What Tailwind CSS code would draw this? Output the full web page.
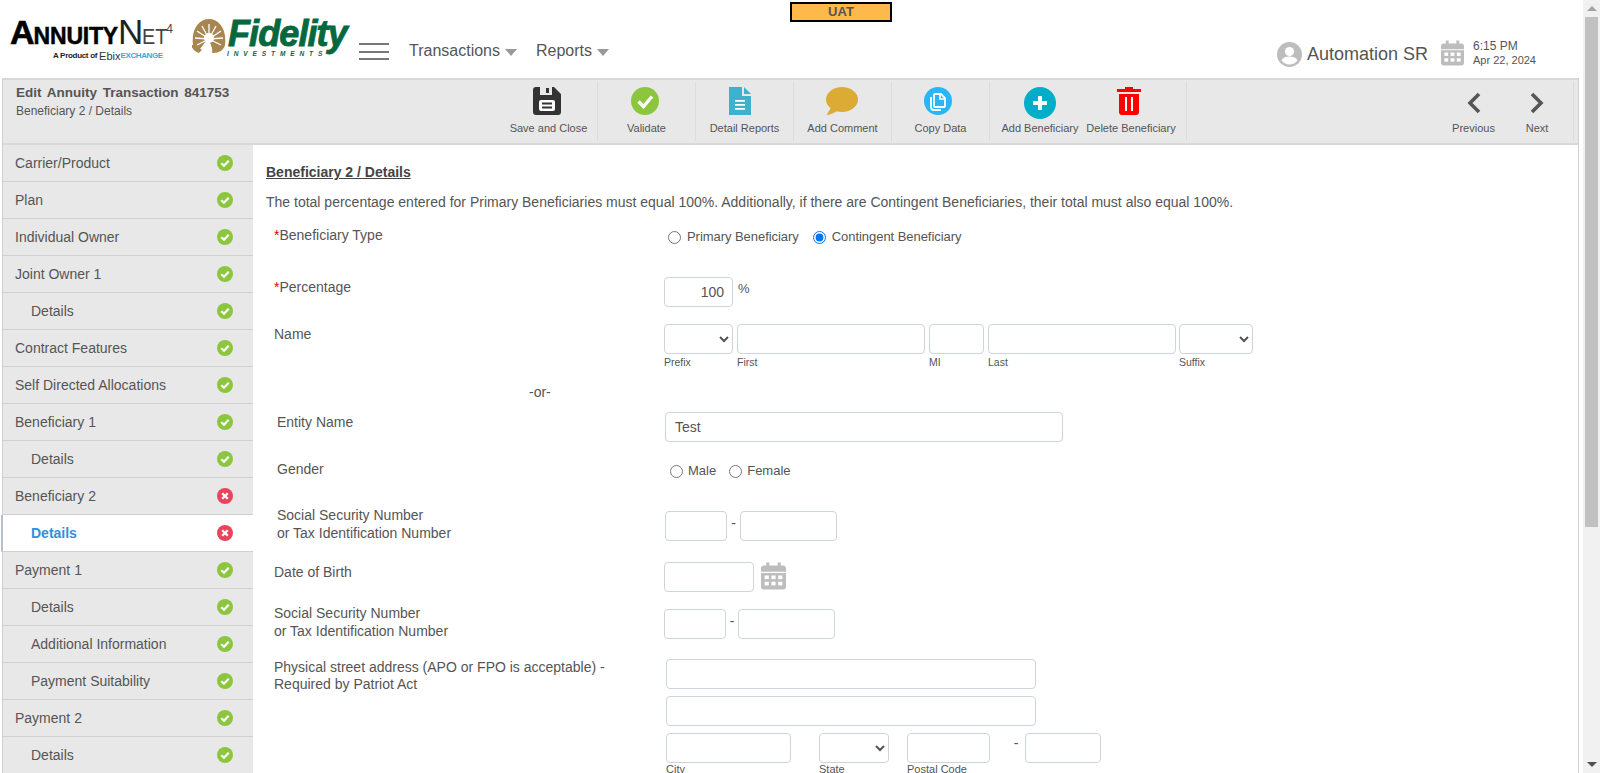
<!DOCTYPE html>
<html lang="en">
<head>
<meta charset="utf-8">
<title>Edit Annuity Transaction</title>
<script src="https://cdn.jsdelivr.net/npm/@tailwindcss/browser@4"></script>
</head>
<body class="m-0 h-[773px] w-[1600px] overflow-hidden bg-white font-['Liberation_Sans',Arial,sans-serif] text-[#555] flex">
<svg class="hidden" width="0" height="0">
  <symbol id="ok" viewBox="0 0 16 16"><circle cx="8" cy="8" r="8" fill="#8cc63f"/><path d="M4.3 8.2l2.7 2.6 4.7-5" fill="none" stroke="#fff" stroke-width="2.2"/></symbol>
  <symbol id="bad" viewBox="0 0 16 16"><circle cx="8" cy="8" r="8" fill="#e8455c"/><path d="M5.2 5.2l5.6 5.6M10.8 5.2l-5.6 5.6" fill="none" stroke="#fff" stroke-width="2.3"/></symbol>
  <symbol id="cal" viewBox="0 0 24 26"><path d="M5 0h3v3h8V0h3v3h2a3 3 0 0 1 3 3v3H0V6a3 3 0 0 1 3-3h2zM0 10h24v13a3 3 0 0 1-3 3H3a3 3 0 0 1-3-3z" fill="#bdbdbd"/><g fill="#fff"><rect x="3.5" y="12.5" width="4" height="3.5"/><rect x="10" y="12.5" width="4" height="3.5"/><rect x="16.5" y="12.5" width="4" height="3.5"/><rect x="3.5" y="18.5" width="4" height="3.5"/><rect x="10" y="18.5" width="4" height="3.5"/><rect x="16.5" y="18.5" width="4" height="3.5"/></g></symbol>
</svg>

<div class="w-[1583px] h-[773px] flex flex-col shrink-0">
  <!-- Header -->
  <header class="relative h-[78px] shrink-0 flex items-start">
    <div class="absolute left-[790px] top-[2px] w-[102px] h-[20px] bg-[#fdb94a] border-2 border-black flex items-center justify-center pb-[2px] text-[13px] font-bold leading-none text-[#555]">UAT</div>

    <div class="w-[186px] ml-[10px] mt-[17px] shrink-0">
      <div class="flex items-baseline h-[30px] text-black leading-[30px] whitespace-nowrap">
        <span class="text-[34px] font-bold [-webkit-text-stroke:0.6px_black] tracking-[-1px]">A</span><span class="text-[23px] font-bold [-webkit-text-stroke:0.5px_black] tracking-[-0.2px]">NNUITY</span><span class="text-[35px] font-normal text-[#222] tracking-[-1px]">N</span><span class="text-[22px] text-[#444] scale-x-90 origin-left inline-block w-[24px]">ET</span><span class="text-[12px] text-[#444] relative bottom-[11px]">4</span>
      </div>
      <div class="mt-[3px] ml-[43px] h-[12px] flex items-center whitespace-nowrap leading-none">
        <span class="text-[8px] font-bold text-[#222] tracking-[-0.3px]">A Product of</span><span class="text-[11px] text-[#333] ml-[2px]">Ebix</span><span class="text-[8px] font-bold text-[#3ba7d8] tracking-[-0.4px]">EXCHANGE</span>
      </div>
    </div>

    <div class="w-[157px] ml-[-4px] mt-[19px] shrink-0 flex">
      <svg width="34" height="34" viewBox="0 0 34 34" class="shrink-0">
        <path d="M1 26C-1 10 7 0 17 0s18 10 16 26c-1 5-6 8-12 8h-1c1-4-1-8-3-12l-5 6c-2 3-4 5-5 6-4-1-7-4-8-8z" fill="#a98650"/>
        <g stroke="#fff" stroke-width="1.3"><path d="M17 20L17 5M17 20L10 7M17 20L24 7M17 20L5 12M17 20L29 12M17 20L3 19M17 20L31 19M17 20L5 26M17 20L29 26"/></g>
        <circle cx="17" cy="19" r="5" fill="#fff"/>
        <path d="M8 30l9-12 3 16h-4l-2-8-3 5z" fill="#fff"/>
      </svg>
      <div class="ml-[2px] -mt-[1px] whitespace-nowrap text-[#05683f]">
        <div class="text-[36px] leading-[31px] font-bold italic [-webkit-text-stroke:0.9px_#05683f] tracking-[-0.9px] h-[31px]">Fidelity</div>
        <div class="text-[6.5px] leading-[7px] font-bold italic tracking-[4.9px] mt-[1px] ml-[-1px]">INVESTMENTS</div>
      </div>
    </div>

    <div class="ml-[10px] mt-[43px] w-[30px] h-[17px] flex flex-col justify-between shrink-0">
      <div class="h-[2px] bg-[#777]"></div><div class="h-[2px] bg-[#777]"></div><div class="h-[2px] bg-[#777]"></div>
    </div>

    <nav class="ml-[20px] mt-[41px] flex items-center text-[16px] leading-[20px] text-[#555] whitespace-nowrap">
      <span>Transactions</span><span class="ml-[5px] mt-[3px] w-0 h-0 border-x-[6px] border-x-transparent border-t-[7px] border-t-[#999]"></span>
      <span class="ml-[19px]">Reports</span><span class="ml-[5px] mt-[3px] w-0 h-0 border-x-[6px] border-x-transparent border-t-[7px] border-t-[#999]"></span>
    </nav>

    <div class="ml-auto mr-[47px] mt-[40px] flex items-start whitespace-nowrap">
      <svg width="25" height="25" viewBox="0 0 25 25" class="mt-[2px]"><circle cx="12.5" cy="12.5" r="12.5" fill="#bdbdbd"/><circle cx="12.5" cy="9.5" r="4.6" fill="#fff"/><path d="M4.5 18.5c1.6-3.2 4.6-4 8-4s6.4.8 8 4c-2 2.6-4.900 4-8 4s-6-1.400-8-4z" fill="#fff"/></svg>
      <span class="ml-[5px] mt-[3px] text-[18px] leading-[22px]">Automation SR</span>
      <svg width="23" height="26" class="ml-[13px]"><use href="#cal"/></svg>
      <div class="ml-[9px] -mt-[1px] text-[12px] leading-[14px]">
        <div>6:15 PM</div><div class="text-[11px]">Apr 22, 2024</div>
      </div>
    </div>
  </header>

  <!-- Panel -->
  <div class="ml-[2px] w-[1577px] flex-1 min-h-0 flex flex-col border-x border-x-[#d0d0d0]">
    <!-- Toolbar -->
    <div class="h-[67px] shrink-0 bg-[#e8e8e8] border-y-2 border-y-[#d8d8d8] flex relative">
      <div class="w-[497px] pl-[13px] pt-[3px] shrink-0">
        <div class="text-[13.5px] font-bold leading-[20px] [word-spacing:2px] whitespace-nowrap">Edit Annuity Transaction 841753</div>
        <div class="text-[12px] leading-[18px] -mt-[1px] whitespace-nowrap">Beneficiary 2 / Details</div>
      </div>

      <div class="w-[98px] my-[2px] border-r border-r-[#dcdcdc] flex flex-col items-center">
        <svg width="28" height="28" viewBox="0 0 28 28" class="mt-[5px] -ml-[3px]"><path d="M3 0h4v8h12V0h2l7 7v18a3 3 0 0 1-3 3H3a3 3 0 0 1-3-3V3a3 3 0 0 1 3-3z" fill="#333"/><rect x="13" y="1" width="3" height="5" fill="#333"/><rect x="6" y="13" width="16" height="11" rx="2" fill="#fff"/><rect x="9" y="15.500" width="10" height="2" fill="#333"/><rect x="9" y="19.500" width="10" height="2" fill="#333"/></svg>
        <span class="mt-[6px] text-[11px] leading-[14px] whitespace-nowrap">Save and Close</span>
      </div>
      <div class="w-[98px] my-[2px] border-r border-r-[#dcdcdc] flex flex-col items-center">
        <svg width="28" height="28" viewBox="0 0 28 28" class="mt-[5px] -ml-[4px]"><circle cx="14" cy="14" r="14" fill="#8cc63f"/><path d="M7.500 14.500l5 5 8.500-10" fill="none" stroke="#fff" stroke-width="3.400"/></svg>
        <span class="mt-[6px] text-[11px] leading-[14px] whitespace-nowrap">Validate</span>
      </div>
      <div class="w-[98px] my-[2px] border-r border-r-[#dcdcdc] flex flex-col items-center">
        <svg width="22" height="28" viewBox="0 0 22 28" class="mt-[5px] -ml-[10px]"><path d="M0 0h13v9h9v19H0z" fill="#3db2cc"/><path d="M15 0l7 7h-7z" fill="#3db2cc"/><path d="M6 13h10v1.800H6zM6 17h10v1.800H6zM6 21h10v1.800H6z" fill="#fff"/></svg>
        <span class="mt-[6px] text-[11px] leading-[14px] whitespace-nowrap">Detail Reports</span>
      </div>
      <div class="w-[98px] my-[2px] border-r border-r-[#dcdcdc] flex flex-col items-center">
        <svg width="32" height="28" viewBox="0 0 32 28" class="mt-[5px] -ml-[2px]"><ellipse cx="16" cy="12.500" rx="16" ry="12.500" fill="#dcab33"/><path d="M6 19L0.500 28c4-.5 8-2 12-5z" fill="#dcab33"/></svg>
        <span class="mt-[6px] text-[11px] leading-[14px] whitespace-nowrap">Add Comment</span>
      </div>
      <div class="w-[98px] my-[2px] border-r border-r-[#dcdcdc] flex flex-col items-center">
        <svg width="28" height="28" viewBox="0 0 28 28" class="mt-[5px] -ml-[6px]"><circle cx="14" cy="14" r="14" fill="#29b6f6"/><path d="M11 7h6l4 4v8a1 1 0 0 1-1 1h-9a1 1 0 0 1-1-1V8a1 1 0 0 1 1-1z" fill="none" stroke="#fff" stroke-width="1.800"/><path d="M7 10v10a3 3 0 0 0 3 3h7" fill="none" stroke="#fff" stroke-width="1.800"/><path d="M16 7v5h5" fill="none" stroke="#fff" stroke-width="1.500"/></svg>
        <span class="mt-[6px] text-[11px] leading-[14px] whitespace-nowrap">Copy Data</span>
      </div>
      <div class="w-[197px] my-[2px] border-r border-r-[#dcdcdc] flex">
        <div class="w-[100px] flex flex-col items-center">
          <svg width="32" height="32" viewBox="0 0 32 32" class="mt-[5px]"><circle cx="16" cy="16" r="16" fill="#00aec7"/><path d="M16 9v14M9 16h14" stroke="#fff" stroke-width="4"/></svg>
          <span class="mt-[2px] text-[11px] leading-[14px] whitespace-nowrap">Add Beneficiary</span>
        </div>
        <div class="w-[82px] flex flex-col items-center">
          <svg width="24" height="28" viewBox="0 0 24 28" class="mt-[5px] -ml-[5px]"><path d="M8 0h8v2h8v3H0V2h8z" fill="#ff0000"/><path d="M2 7h20v18a3 3 0 0 1-3 3H5a3 3 0 0 1-3-3z" fill="#ff0000"/><path d="M9 10v14M15 10v14" stroke="#fff" stroke-width="2"/></svg>
          <span class="mt-[6px] text-[11px] leading-[14px] whitespace-nowrap">Delete Beneficiary</span>
        </div>
      </div>

      <div class="ml-auto mr-[4px] my-[2px] pr-[4px] border-r border-r-[#dcdcdc] flex">
        <div class="w-[63px] flex flex-col items-center">
          <svg width="14" height="22" viewBox="0 0 14 22" class="mt-[10px]"><path d="M12 2L3 11l9 9" fill="none" stroke="#555" stroke-width="3.600"/></svg>
          <span class="mt-[7px] text-[11px] leading-[14px] whitespace-nowrap">Previous</span>
        </div>
        <div class="w-[64px] flex flex-col items-center">
          <svg width="14" height="22" viewBox="0 0 14 22" class="mt-[10px]"><path d="M2 2l9 9-9 9" fill="none" stroke="#555" stroke-width="3.600"/></svg>
          <span class="mt-[7px] text-[11px] leading-[14px] whitespace-nowrap">Next</span>
        </div>
      </div>
    </div>

    <!-- Body -->
    <div class="flex-1 min-h-0 flex">
      <!-- Sidebar -->
      <aside class="w-[250px] shrink-0 bg-[#e8e8e8] text-[14px] leading-[20px]">
        <div class="h-[37px] pl-[12px] pr-[20px] border-b border-b-[#d0d0d0] flex items-center justify-between"><span>Carrier/Product</span><svg width="16" height="16"><use href="#ok"/></svg></div>
        <div class="h-[37px] pl-[12px] pr-[20px] border-b border-b-[#d0d0d0] flex items-center justify-between"><span>Plan</span><svg width="16" height="16"><use href="#ok"/></svg></div>
        <div class="h-[37px] pl-[12px] pr-[20px] border-b border-b-[#d0d0d0] flex items-center justify-between"><span>Individual Owner</span><svg width="16" height="16"><use href="#ok"/></svg></div>
        <div class="h-[37px] pl-[12px] pr-[20px] border-b border-b-[#d0d0d0] flex items-center justify-between"><span>Joint Owner 1</span><svg width="16" height="16"><use href="#ok"/></svg></div>
        <div class="h-[37px] pl-[28px] pr-[20px] border-b border-b-[#d0d0d0] flex items-center justify-between"><span>Details</span><svg width="16" height="16"><use href="#ok"/></svg></div>
        <div class="h-[37px] pl-[12px] pr-[20px] border-b border-b-[#d0d0d0] flex items-center justify-between"><span>Contract Features</span><svg width="16" height="16"><use href="#ok"/></svg></div>
        <div class="h-[37px] pl-[12px] pr-[20px] border-b border-b-[#d0d0d0] flex items-center justify-between"><span>Self Directed Allocations</span><svg width="16" height="16"><use href="#ok"/></svg></div>
        <div class="h-[37px] pl-[12px] pr-[20px] border-b border-b-[#d0d0d0] flex items-center justify-between"><span>Beneficiary 1</span><svg width="16" height="16"><use href="#ok"/></svg></div>
        <div class="h-[37px] pl-[28px] pr-[20px] border-b border-b-[#d0d0d0] flex items-center justify-between"><span>Details</span><svg width="16" height="16"><use href="#ok"/></svg></div>
        <div class="h-[37px] pl-[12px] pr-[20px] border-b border-b-[#d0d0d0] flex items-center justify-between"><span>Beneficiary 2</span><svg width="16" height="16"><use href="#bad"/></svg></div>
        <div class="h-[37px] -ml-[2px] pl-[28px] pr-[20px] border-b border-b-[#d0d0d0] border-l-2 border-l-[#b8c0d4] bg-white flex items-center justify-between"><span class="font-bold text-[#2e90e0]">Details</span><svg width="16" height="16"><use href="#bad"/></svg></div>
        <div class="h-[37px] pl-[12px] pr-[20px] border-b border-b-[#d0d0d0] flex items-center justify-between"><span>Payment 1</span><svg width="16" height="16"><use href="#ok"/></svg></div>
        <div class="h-[37px] pl-[28px] pr-[20px] border-b border-b-[#d0d0d0] flex items-center justify-between"><span>Details</span><svg width="16" height="16"><use href="#ok"/></svg></div>
        <div class="h-[37px] pl-[28px] pr-[20px] border-b border-b-[#d0d0d0] flex items-center justify-between"><span>Additional Information</span><svg width="16" height="16"><use href="#ok"/></svg></div>
        <div class="h-[37px] pl-[28px] pr-[20px] border-b border-b-[#d0d0d0] flex items-center justify-between"><span>Payment Suitability</span><svg width="16" height="16"><use href="#ok"/></svg></div>
        <div class="h-[37px] pl-[12px] pr-[20px] border-b border-b-[#d0d0d0] flex items-center justify-between"><span>Payment 2</span><svg width="16" height="16"><use href="#ok"/></svg></div>
        <div class="h-[37px] pl-[28px] pr-[20px] border-b border-b-[#d0d0d0] flex items-center justify-between"><span>Details</span><svg width="16" height="16"><use href="#ok"/></svg></div>
      </aside>

      <!-- Form -->
      <main class="flex-1 min-w-0 pt-[17px] text-[14px] leading-[20px]">
        <h2 class="ml-[13px] font-bold underline text-[#444]">Beneficiary 2 / Details</h2>
        <p class="ml-[13px] mt-[10px] h-[34px] whitespace-nowrap">The total percentage entered for Primary Beneficiaries must equal 100%. Additionally, if there are Contingent Beneficiaries, their total must also equal 100%.</p>

        <div class="flex h-[51px]">
          <div class="w-[411px] pl-[21px] shrink-0 -mt-[1px]"><span class="text-[#e00000]">*</span>Beneficiary Type</div>
          <div class="mt-[1px] flex h-[20px] text-[13px] items-center">
            <input type="radio" name="bt" class="ml-[4px]"><span class="ml-[6px] tracking-[-0.05px]">Primary Beneficiary</span>
            <input type="radio" name="bt" checked class="ml-[14px]"><span class="ml-[6px] tracking-[-0.05px]">Contingent Beneficiary</span>
          </div>
        </div>

        <div class="flex h-[47px]">
          <div class="w-[411px] pl-[21px] shrink-0"><span class="text-[#e00000]">*</span>Percentage</div>
          <input value="100" class="w-[69px] h-[30px] border border-[#ced4da] rounded-[4px] px-[8px] text-right text-[14px] text-[#555]">
          <span class="ml-[5px] mt-[2px] text-[13px]">%</span>
        </div>

        <div class="flex h-[59px]">
          <div class="w-[411px] pl-[21px] shrink-0">Name</div>
          <div class="w-[69px] mr-[4px]"><select class="w-[69px] h-[30px] border border-[#ced4da] rounded-[4px] text-[#555]"></select><div class="text-[10.5px] leading-[13px] mt-[2px]">Prefix</div></div>
          <div class="w-[188px] mr-[4px]"><input class="w-full h-[30px] border border-[#ced4da] rounded-[4px]"><div class="text-[10.5px] leading-[13px] mt-[2px]">First</div></div>
          <div class="w-[55px] mr-[4px]"><input class="w-full h-[30px] border border-[#ced4da] rounded-[4px]"><div class="text-[10.5px] leading-[13px] mt-[2px]">MI</div></div>
          <div class="w-[188px] mr-[3px]"><input class="w-full h-[30px] border border-[#ced4da] rounded-[4px]"><div class="text-[10.5px] leading-[13px] mt-[2px]">Last</div></div>
          <div class="w-[74px]"><select class="w-[74px] h-[30px] border border-[#ced4da] rounded-[4px] text-[#555]"></select><div class="text-[10.5px] leading-[13px] mt-[2px]">Suffix</div></div>
        </div>

        <div class="h-[30px] -mt-[1px] pl-[276px]">-or-</div>

        <div class="flex h-[47px]">
          <div class="w-[412px] pl-[24px] shrink-0">Entity Name</div>
          <input value="Test" class="w-[398px] h-[30px] border border-[#ced4da] rounded-[4px] px-[9px] text-[14px] text-[#555]">
        </div>

        <div class="flex h-[48px]">
          <div class="w-[412px] pl-[24px] shrink-0">Gender</div>
          <div class="mt-[2px] flex items-center h-[20px] text-[13px]">
            <input type="radio" name="g" class="ml-[5px]"><span class="ml-[5px]">Male</span>
            <input type="radio" name="g" class="ml-[13px]"><span class="ml-[5px]">Female</span>
          </div>
        </div>

        <div class="flex h-[55px]">
          <div class="w-[412px] pl-[24px] shrink-0 leading-[17.500px]">Social Security Number<br>or Tax Identification Number</div>
          <div class="mt-[4px] flex items-start">
            <input class="w-[62px] h-[30px] border border-[#ced4da] rounded-[4px]"><span class="w-[13px] text-center mt-[2px]">-</span><input class="w-[97px] h-[30px] border border-[#ced4da] rounded-[4px]">
          </div>
        </div>

        <div class="flex h-[47px]">
          <div class="w-[411px] pl-[21px] shrink-0">Date of Birth</div>
          <input class="w-[90px] h-[30px] border border-[#ced4da] rounded-[4px]">
          <svg width="25" height="28" class="ml-[7px]"><use href="#cal"/></svg>
        </div>

        <div class="flex h-[50px]">
          <div class="w-[411px] pl-[21px] shrink-0 leading-[17.500px] -mt-[4px]">Social Security Number<br>or Tax Identification Number</div>
          <div class="flex items-start">
            <input class="w-[62px] h-[30px] border border-[#ced4da] rounded-[4px]"><span class="w-[12px] text-center mt-[2px]">-</span><input class="w-[97px] h-[30px] border border-[#ced4da] rounded-[4px]">
          </div>
        </div>

        <div class="flex">
          <div class="w-[413px] pl-[21px] shrink-0 leading-[17px]">Physical street address (APO or FPO is acceptable) -<br>Required by Patriot Act</div>
          <div class="flex flex-col gap-[7px]">
            <input class="w-[370px] h-[30px] border border-[#ced4da] rounded-[4px]">
            <input class="w-[370px] h-[30px] border border-[#ced4da] rounded-[4px]">
            <div class="flex items-start">
              <div class="w-[125px] mr-[28px]"><input class="w-full h-[30px] border border-[#ced4da] rounded-[4px]"><div class="text-[11px] leading-[13px] mt-[0px]">City</div></div>
              <div class="w-[70px] mr-[18px]"><select class="w-full h-[30px] border border-[#ced4da] rounded-[4px]"></select><div class="text-[11px] leading-[13px]">State</div></div>
              <div class="w-[83px]"><input class="w-full h-[30px] border border-[#ced4da] rounded-[4px]"><div class="text-[11px] leading-[13px] whitespace-nowrap">Postal Code</div></div>
              <span class="w-[35px] text-center pl-[17px]">-</span>
              <input class="w-[76px] h-[30px] border border-[#ced4da] rounded-[4px]">
            </div>
          </div>
        </div>
      </main>
    </div>
  </div>
</div>

<!-- Scrollbar -->
<div class="w-[17px] h-[773px] bg-[#f1f1f1] flex flex-col items-center shrink-0">
  <div class="h-[17px] flex items-center justify-center"><div class="w-0 h-0 border-x-[5px] border-x-transparent border-b-[5px] border-b-[#a3a3a3]"></div></div>
  <div class="w-[13px] h-[510px] bg-[#c1c1c1]"></div>
  <div class="mt-auto h-[17px] flex items-center justify-center"><div class="w-0 h-0 border-x-[5px] border-x-transparent border-t-[5px] border-t-[#505050]"></div></div>
</div>
</body>
</html>
